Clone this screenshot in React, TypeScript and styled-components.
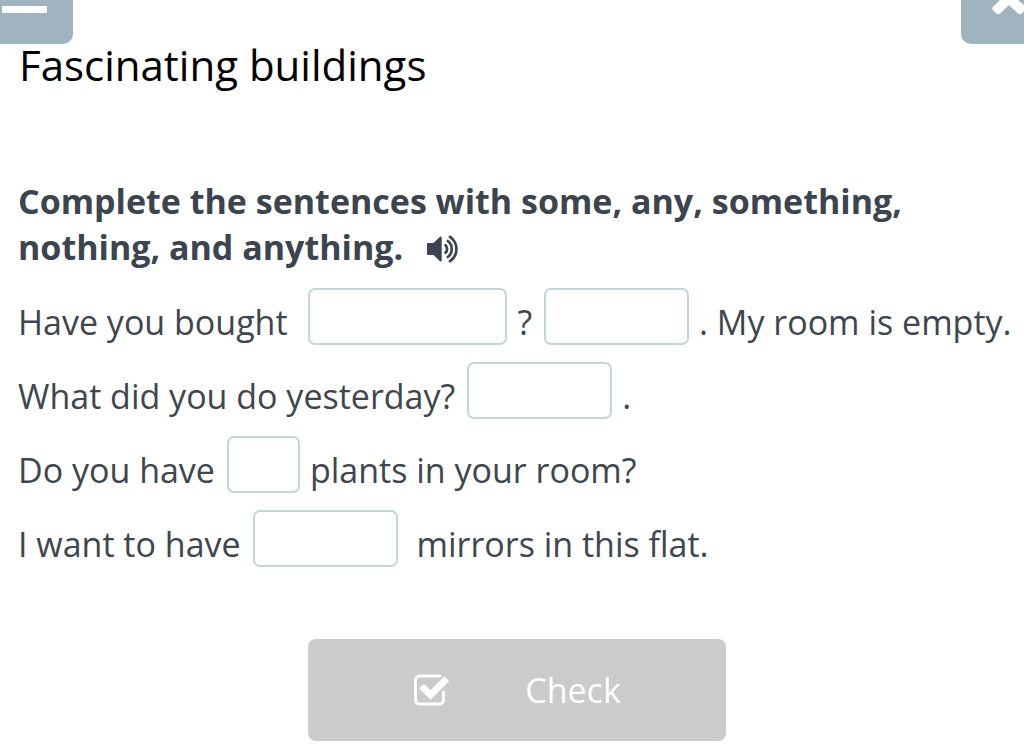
import React from "react";
import styled, { createGlobalStyle } from "styled-components";

const GlobalStyle = createGlobalStyle`
  * { box-sizing: border-box; }
  body {
    margin: 0;
    background: #fff;
    color: #3b444f;
    font-family: "Open Sans", "Noto Sans", sans-serif;
  }
`;

const TopBar = styled.header`
  display: flex;
  justify-content: space-between;
`;

const CornerButton = styled.button<{ $side: "left" | "right" }>`
  width: ${(p) => (p.$side === "left" ? 73 : 63)}px;
  height: 44px;
  padding: 0;
  border: 0;
  border-radius: ${(p) => (p.$side === "left" ? "0 0 10px 0" : "0 0 0 10px")};
  background: #a0b4c0;
  color: #fff;
  overflow: hidden;

  svg { display: block; }
`;

const Title = styled.h1`
  margin: 0;
  padding: 0 19px;
  color: #000;
  font-size: 42px;
  line-height: 42px;
  font-weight: 400;
`;

const Exercise = styled.form`
  padding: 92px 8px 8px 18px;
`;

const Instruction = styled.h2`
  margin: 0 0 18px;
  max-width: 920px;
  font-size: 34px;
  line-height: 46px;
  font-weight: 700;
`;

const SoundButton = styled.button`
  margin: 0 0 0 24px;
  padding: 0 0 4px;
  border: 0;
  background: none;
  color: inherit;
  vertical-align: middle;

  svg { display: block; }
`;

const Sentence = styled.p`
  display: flex;
  align-items: flex-end;
  margin: 0 0 17px;
  color: #40464e;
  font-size: 34px;
  line-height: 46px;
  white-space: pre;
`;

const Blank = styled.input<{ $size: "small" | "medium" | "large" }>`
  width: ${(p) => ({ small: 73, medium: 145, large: 199 })[p.$size]}px;
  height: 57px;
  margin: 0 10px 0 12px;
  padding: 0 8px;
  border: 2px solid #c3d6d8;
  border-radius: 7px;
  background: #fff;
  color: inherit;
  font: inherit;
`;

const CheckButton = styled.button`
  display: flex;
  align-items: center;
  justify-content: center;
  gap: 76px;
  width: 418px;
  height: 102px;
  margin: 72px auto 0;
  border: 0;
  border-radius: 8px;
  background: #cbcbcb;
  color: #fff;
  font: inherit;
  font-size: 34px;
`;

const MenuIcon = () => (
  <svg width="73" height="44" aria-hidden="true">
    <rect x="2" y="6" width="45" height="7" rx="1" fill="currentColor" />
  </svg>
);

const CloseIcon = () => (
  <svg width="63" height="44" aria-hidden="true">
    <path
      d="M25 -9 L40 -9 L40 -1 L31.8 7 Q30.6 8.4 31.8 9.8 L35.4 13.4 Q37 15 39 13.4 L48 5 L57 13.4 Q59 15 60.6 13.4 L66 8 L56 -1 L56 -9 Z"
      fill="currentColor"
    />
  </svg>
);

const SoundIcon = () => (
  <svg width="32" height="28" viewBox="0 0 32 28" aria-hidden="true">
    <path d="M0 9 Q0 8 1 8 H6.5 L13 1.8 Q14.7 0.8 14.7 2.5 V25.5 Q14.7 27.2 13 26.2 L6.5 20 H1 Q0 20 0 19 Z" fill="currentColor" />
    <g fill="none" stroke="currentColor" strokeWidth="2.7" strokeLinecap="round">
      <path d="M18.5 10.3 A5 5 0 0 1 18.5 17.7" />
      <path d="M20.8 6 A10 10 0 0 1 20.8 22" />
      <path d="M23 1.8 A14.8 14.8 0 0 1 23 26.2" />
    </g>
  </svg>
);

const CheckIcon = () => (
  <svg width="36" height="32" viewBox="0 0 36 32" aria-hidden="true">
    <path d="M27 2 H7 Q2.5 2 2.5 6.5 V25.5 Q2.5 30 7 30 H26 Q30.5 30 30.5 25.5 V18" fill="none" stroke="currentColor" strokeWidth="2.8" strokeLinecap="round" />
    <path d="M7 13.5 L10 10.5 Q10.8 9.7 11.6 10.5 L17.6 16.3 L30.6 3.1 Q31.4 2.3 32.2 3.1 L35.4 6.3 Q36 7.1 35.4 7.9 L18.4 25 Q17.6 25.8 16.8 25 L7 15.2 Q6.2 14.3 7 13.5 Z" fill="currentColor" />
  </svg>
);

export default function App() {
  return (
    <>
      <GlobalStyle />
      <TopBar>
        <CornerButton type="button" $side="left" aria-label="Menu"><MenuIcon /></CornerButton>
        <CornerButton type="button" $side="right" aria-label="Close"><CloseIcon /></CornerButton>
      </TopBar>
      <main>
        <Title>Fascinating buildings</Title>
        <Exercise onSubmit={(e) => e.preventDefault()}>
          <Instruction>
            Complete the sentences with some, any, something, nothing, and anything.
            <SoundButton type="button" aria-label="Listen"><SoundIcon /></SoundButton>
          </Instruction>
          <Sentence>Have you bought <Blank $size="large" aria-label="Blank 1" />?<Blank $size="medium" aria-label="Blank 2" />. My room is empty.</Sentence>
          <Sentence>What did you do yesterday?<Blank $size="medium" aria-label="Blank 3" />.</Sentence>
          <Sentence>Do you have<Blank $size="small" aria-label="Blank 4" />plants in your room?</Sentence>
          <Sentence>I want to have<Blank $size="medium" aria-label="Blank 5" /> mirrors in this flat.</Sentence>
          <CheckButton type="submit"><CheckIcon />Check</CheckButton>
        </Exercise>
      </main>
    </>
  );
}
